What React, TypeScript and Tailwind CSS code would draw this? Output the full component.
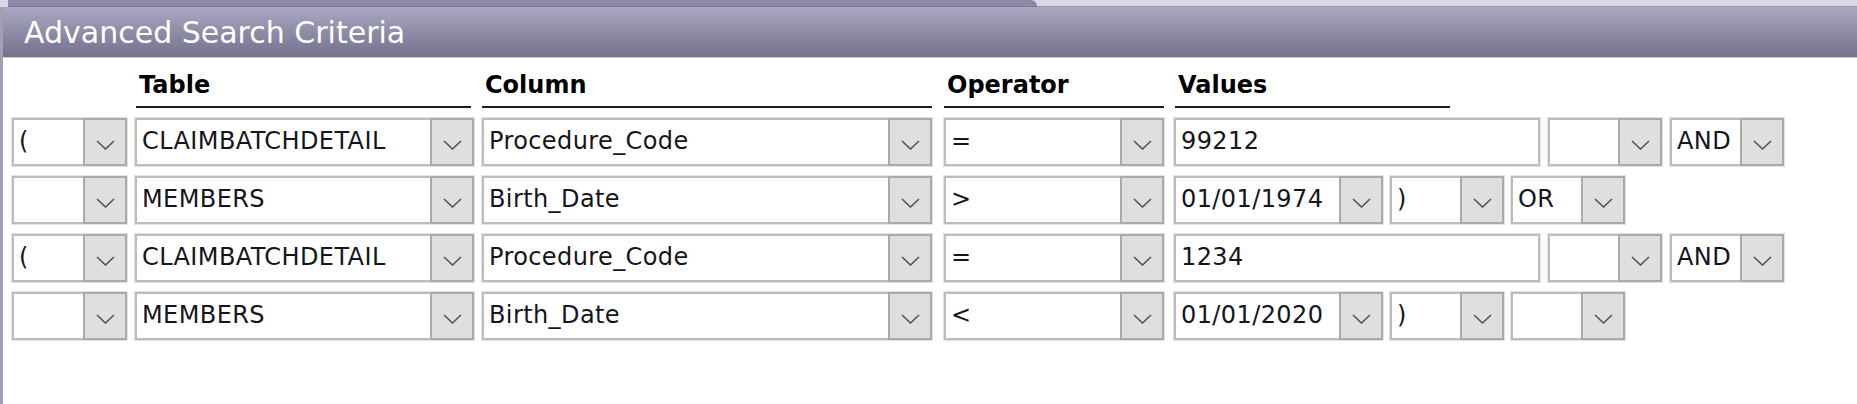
import React from 'react';

type Row = {
  open: string;
  table: string;
  column: string;
  op: string;
  value: string;
  isDate: boolean;
  close: string;
  logic: string;
};

const ROWS: Row[] = [
  { open: '(', table: 'CLAIMBATCHDETAIL', column: 'Procedure_Code', op: '=', value: '99212', isDate: false, close: '', logic: 'AND' },
  { open: '', table: 'MEMBERS', column: 'Birth_Date', op: '>', value: '01/01/1974', isDate: true, close: ')', logic: 'OR' },
  { open: '(', table: 'CLAIMBATCHDETAIL', column: 'Procedure_Code', op: '=', value: '1234', isDate: false, close: '', logic: 'AND' },
  { open: '', table: 'MEMBERS', column: 'Birth_Date', op: '<', value: '01/01/2020', isDate: true, close: ')', logic: '' },
];

const Chevron = () => (
  <svg width="19" height="10" viewBox="0 0 19 10">
    <path d="M1 1l8.5 8 8.5-8" fill="none" stroke="#555" strokeWidth="1.6" />
  </svg>
);

const Combo = ({ value, className }: { value: string; className: string }) => (
  <div className={`flex h-full border-2 border-[#bdbdbd] bg-white shadow-[0_0_0_1px_#e2e2e2] ${className}`}>
    <div className="flex-1 overflow-hidden whitespace-nowrap pl-[5px] pt-[7px] text-[24px] leading-[28px] tracking-[0.4px] text-[#151520]">
      {value}
    </div>
    <div className="-my-[2px] -mr-[2px] flex w-[44px] items-center justify-center border-2 border-[#aaaaaa] bg-[#dfdfdf] pt-[6px]">
      <Chevron />
    </div>
  </div>
);

const TextBox = ({ value, className }: { value: string; className: string }) => (
  <div className={`h-full border-2 border-[#bdbdbd] bg-white pl-[5px] pt-[7px] text-[24px] leading-[28px] tracking-[0.4px] text-[#151520] shadow-[0_0_0_1px_#e2e2e2] ${className}`}>
    {value}
  </div>
);

const Header = ({ label, className }: { label: string; className: string }) => (
  <div className={`h-[33px] border-b-2 border-[#1c1c1c] pl-[3px] text-[24px] font-bold leading-[20px] text-black ${className}`}>
    {label}
  </div>
);

export default function App() {
  return (
    <div
      className="h-[404px] w-[1857px] overflow-hidden bg-white"
      style={{ fontFamily: '"DejaVu Sans", Verdana, sans-serif' }}
    >
      {/* tab strip above the panel */}
      <div className="flex h-[7px] bg-[#d9d8e5]">
        <div className="ml-[8px] w-[1029px] rounded-tr-[6px] border-b border-[#7b7894] bg-[#8d8aa7]" />
        <div className="flex-1 border-b border-[#9a98b2]" />
      </div>

      <div className="h-[397px] border-l-[3px] border-[#a19fb6]">
        <div className="h-[51px] border-b border-[#c9c8d6] bg-gradient-to-b from-[#aaa8c2] to-[#74718d] pl-[21px] pt-[9px] text-[30px] leading-[34px] text-white">
          Advanced Search Criteria
        </div>

        <div className="flex pl-[133px] pt-[17px]">
          <Header label="Table" className="w-[335px]" />
          <Header label="Column" className="ml-[11px] w-[450px]" />
          <Header label="Operator" className="ml-[12px] w-[220px]" />
          <Header label="Values" className="ml-[11px] w-[275px]" />
        </div>

        <div className="flex flex-col gap-[10px] pl-[9px] pt-[10px]">
          {ROWS.map((r, i) => (
            <div key={i} className="flex h-[48px]">
              <Combo value={r.open} className="w-[115px]" />
              <Combo value={r.table} className="ml-[8px] w-[339px]" />
              <Combo value={r.column} className="ml-[8px] w-[450px]" />
              <Combo value={r.op} className="ml-[12px] w-[220px]" />
              {r.isDate ? (
                <>
                  <Combo value={r.value} className="ml-[10px] w-[209px]" />
                  <Combo value={r.close} className="ml-[7px] w-[114px]" />
                  <Combo value={r.logic} className="ml-[7px] w-[114px]" />
                </>
              ) : (
                <>
                  <TextBox value={r.value} className="ml-[10px] w-[366px]" />
                  <Combo value={r.close} className="ml-[8px] w-[114px]" />
                  <Combo value={r.logic} className="ml-[8px] w-[114px]" />
                </>
              )}
            </div>
          ))}
        </div>
      </div>
    </div>
  );
}
